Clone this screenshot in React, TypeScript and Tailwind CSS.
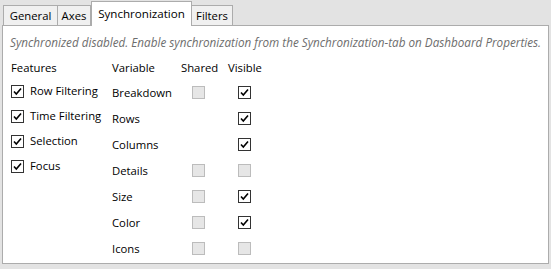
import React from "react";

const font = { fontFamily: '"Open Sans", "Noto Sans", sans-serif' };

function Check({ checked, disabled }: { checked?: boolean; disabled?: boolean }) {
  if (disabled) {
    return <div className="w-[13px] h-[13px] border border-[#bcbcbc] bg-[#e6e6e6] box-border" />;
  }
  return (
    <div className="w-[13px] h-[13px] border border-[#333333] bg-white box-border flex items-center justify-center">
      {checked && (
        <svg width="11" height="11" viewBox="0 0 11 11">
          <path d="M2 5.5 L4.3 8 L9 2.5" fill="none" stroke="#000" strokeWidth="1.6" />
        </svg>
      )}
    </div>
  );
}

const features = ["Row Filtering", "Time Filtering", "Selection", "Focus"];
const vars: { name: string; shared: boolean; visible: "on" | "off" }[] = [
  { name: "Breakdown", shared: true, visible: "on" },
  { name: "Rows", shared: false, visible: "on" },
  { name: "Columns", shared: false, visible: "on" },
  { name: "Details", shared: true, visible: "off" },
  { name: "Size", shared: true, visible: "on" },
  { name: "Color", shared: true, visible: "on" },
  { name: "Icons", shared: true, visible: "off" },
];

export default function App() {
  return (
    <div className="w-[551px] h-[269px] bg-[#e3e3e3] text-[11.3px] text-black overflow-hidden" style={font}>
      <div className="flex items-end h-[25px] pl-[3px] relative z-10">
        <div className="h-[20px] border border-b-0 border-[#acacac] bg-[#f0f0f0] flex items-center justify-center leading-none w-[55px]">General</div>
        <div className="h-[20px] border border-l-0 border-b-0 border-[#acacac] bg-[#f0f0f0] flex items-center justify-center leading-none w-[33px]">Axes</div>
        <div className="border border-b-0 border-[#acacac] bg-white flex items-center justify-center leading-none w-[101px] mb-[-1px] h-[25px] pb-[1px] text-[11.6px]">Synchronization</div>
        <div className="h-[20px] border border-l-0 border-b-0 border-[#acacac] bg-[#f0f0f0] flex items-center justify-center leading-none w-[41px]">Filters</div>
      </div>
      <div className="ml-[2px] w-[547px] h-[239px] border border-[#acacac] bg-white box-border relative">
        <div className="pl-[7px] pt-[8px] italic text-[#6d6d6d] leading-[16px] whitespace-nowrap text-[11.7px]">
          Synchronized disabled. Enable synchronization from the Synchronization-tab on Dashboard Properties.
        </div>
        <div className="flex mt-[10px]">
          <div className="pl-[8px] w-[109px]">
            <div className="h-[16px] leading-[16px]">Features</div>
            <div className="mt-[3px] flex flex-col">
              {features.map((f) => (
                <div key={f} className="h-[25px] flex items-center gap-[6px] whitespace-nowrap">
                  <Check checked />
                  <span className="leading-[16px] -mt-[1px]">{f}</span>
                </div>
              ))}
            </div>
          </div>
          <div>
            <div className="flex h-[16px] leading-[16px]">
              <div className="w-[69px]">Variable</div>
              <div className="w-[47px]">Shared</div>
              <div>Visible</div>
            </div>
            <div className="mt-[3px] flex flex-col">
              {vars.map((v) => (
                <div key={v.name} className="h-[26px] flex items-center">
                  <div className="w-[80px] leading-[16px] pt-[2px]">{v.name}</div>
                  <div className="w-[46px]">{v.shared && <Check disabled />}</div>
                  <div>{v.visible === "on" ? <Check checked /> : <Check disabled />}</div>
                </div>
              ))}
            </div>
          </div>
        </div>
      </div>
    </div>
  );
}
